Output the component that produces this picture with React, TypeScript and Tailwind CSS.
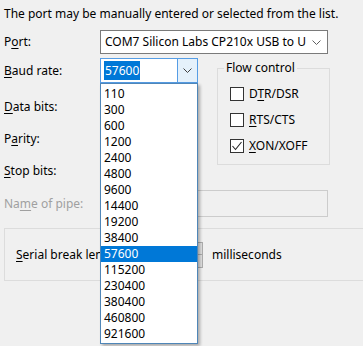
import React from "react";

const bauds = ["110","300","600","1200","2400","4800","9600","14400","19200","38400","57600","115200","230400","380400","460800","921600"];

function Chevron({ color = "#606060" }: { color?: string }) {
  return (
    <svg width="9" height="5" viewBox="0 0 9 5" className="block">
      <polyline points="0.5,0.5 4.5,4.5 8.5,0.5" fill="none" stroke={color} strokeWidth="1" />
    </svg>
  );
}

function U({ children }: { children: React.ReactNode }) {
  return <span className="underline underline-offset-[2px] decoration-[1px]">{children}</span>;
}

function Check({ checked, children }: { checked?: boolean; children: React.ReactNode }) {
  return (
    <div className="flex items-center h-[16px]">
      <div className="w-[14px] h-[14px] border border-[#333333] bg-white flex items-center justify-center">
        {checked && (
          <svg width="12" height="12" viewBox="0 0 12 12">
            <polyline points="1.5,6 4.5,9.5 10.5,2" fill="none" stroke="#222" strokeWidth="1.1" />
          </svg>
        )}
      </div>
      <span className="ml-[5px]">{children}</span>
    </div>
  );
}

export default function App() {
  return (
    <div className="relative w-[363px] h-[346px] overflow-hidden bg-[#f0f0f0] text-[12px] text-black font-['Noto_Sans',sans-serif] leading-[16px]">
      <div className="pt-[6px] pl-[4px] h-[22px] leading-[16px] whitespace-nowrap">
        The port may be manually entered or selected from the list.
      </div>

      <div className="mt-[8px] flex items-center h-[24px] pl-[4px]">
        <div className="w-[96px]">P<U>o</U>rt:</div>
        <div className="w-[228px] h-[24px] border border-[#7a7a7a] bg-white flex items-center pl-[4px] pr-[6px]">
          <span className="w-[208px] whitespace-nowrap overflow-hidden">COM7 Silicon Labs CP210x USB to U</span>
          <span className="ml-auto"><Chevron /></span>
        </div>
      </div>

      <div className="mt-[4px] flex pl-[4px]">
        <div className="w-[213px]">
          <div className="flex items-center h-[25px]">
            <div className="w-[96px]"><U>B</U>aud rate:</div>
            <div className="w-[98px] h-[25px] border border-[#569de5] bg-white flex">
              <div className="flex-1 flex items-center pl-[3px]">
                <span className="bg-[#0078d7] text-white h-[19px] leading-[19px] px-[1px]">57600</span>
              </div>
              <div className="w-[20px] h-full bg-[#e5f1fb] border-l border-[#569de5] flex items-center justify-center">
                <Chevron color="#404040" />
              </div>
            </div>
          </div>
          <div className="mt-[16px] h-[16px]"><U>D</U>ata bits:</div>
          <div className="mt-[16px] h-[16px]">P<U>a</U>rity:</div>
          <div className="mt-[16px] h-[16px]"><U>S</U>top bits:</div>
        </div>
        <div className="mt-[10px] relative w-[113px] h-[97px] border border-[#dcdcdc]">
          <div className="absolute -top-[9px] left-[6px] bg-[#f0f0f0] px-[2px] leading-[16px]">Flow control</div>
          <div className="pt-[17px] pl-[12px] flex flex-col gap-[10px]">
            <Check>D<U>T</U>R/DSR</Check>
            <Check><U>R</U>TS/CTS</Check>
            <Check checked><U>X</U>ON/XOFF</Check>
          </div>
        </div>
      </div>

      <div className="mt-[11px] flex items-center h-[27px] pl-[4px]">
        <div className="w-[96px] text-[#a0a0a0]">Na<U>m</U>e of pipe:</div>
        <div className="w-[228px] h-[27px] border border-[#cccccc] bg-[#f0f0f0]"></div>
      </div>

      <div className="mt-[11px] ml-[4px] w-[420px] h-[53px] border border-[#dcdcdc] flex items-center pl-[11px]">
        <div className="w-[134px]">
          <div className="w-[84px] whitespace-nowrap overflow-hidden"><U>S</U>erial break length:</div>
        </div>
        <div className="w-[53px] h-[26px] border border-[#adadad] bg-white flex">
          <div className="flex-1"></div>
          <div className="w-[8px] h-full flex flex-col border-l border-[#adadad] bg-[#e1e1e1]">
            <div className="flex-1 border-b border-[#adadad]"></div>
            <div className="flex-1"></div>
          </div>
        </div>
        <div className="ml-[9px]">milliseconds</div>
      </div>

      <div className="absolute left-[100px] top-[83px] w-[98px] border border-[#4f86b8] bg-white pt-[2px] pb-[1px] shadow-[2px_2px_3px_rgba(0,0,0,0.3)]">
        {bauds.map((b) => (
          <div
            key={b}
            className={
              b === "57600"
                ? "h-[16px] leading-[16px] pl-[3px] bg-[#0078d7] text-white"
                : "h-[16px] leading-[16px] pl-[3px]"
            }
          >
            {b}
          </div>
        ))}
      </div>
    </div>
  );
}
